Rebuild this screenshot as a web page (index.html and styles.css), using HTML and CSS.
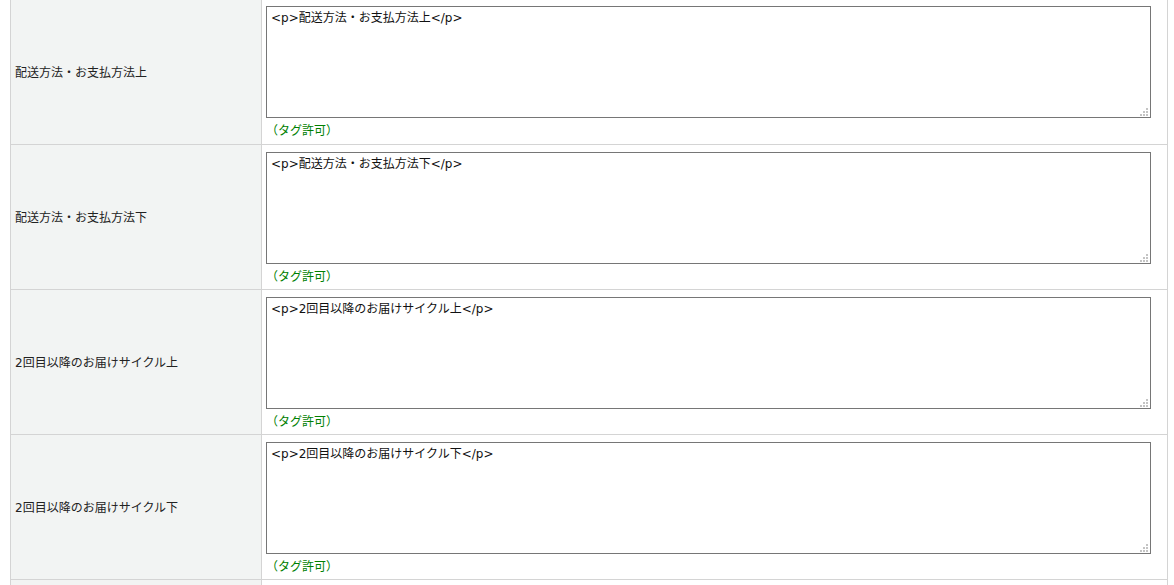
FILE: index.html
```html
<!DOCTYPE html>
<html lang="ja">
<head>
    <meta charset="UTF-8">
    <meta name="viewport" content="width=device-width, initial-scale=1.0">
    <title>テンプレート設定</title>
    <link rel="stylesheet" href="styles.css">
</head>
<body>
    <table class="form-table">
        <tr>
            <th>配送方法・お支払方法上</th>
            <td>
                <div class="field">
                    <textarea>&lt;p&gt;配送方法・お支払方法上&lt;/p&gt;</textarea>
                    <svg class="grip" width="8" height="8" viewBox="0 0 8 8"><path d="M6 0h2v2h-2zM3 3h2v2h-2zM6 3h2v2h-2zM0 6h2v2h-2zM3 6h2v2h-2zM6 6h2v2h-2z"/></svg>
                </div>
                <div class="note">（タグ許可）</div>
            </td>
        </tr>
        <tr>
            <th>配送方法・お支払方法下</th>
            <td>
                <div class="field">
                    <textarea>&lt;p&gt;配送方法・お支払方法下&lt;/p&gt;</textarea>
                    <svg class="grip" width="8" height="8" viewBox="0 0 8 8"><path d="M6 0h2v2h-2zM3 3h2v2h-2zM6 3h2v2h-2zM0 6h2v2h-2zM3 6h2v2h-2zM6 6h2v2h-2z"/></svg>
                </div>
                <div class="note">（タグ許可）</div>
            </td>
        </tr>
        <tr>
            <th>2回目以降のお届けサイクル上</th>
            <td>
                <div class="field">
                    <textarea>&lt;p&gt;2回目以降のお届けサイクル上&lt;/p&gt;</textarea>
                    <svg class="grip" width="8" height="8" viewBox="0 0 8 8"><path d="M6 0h2v2h-2zM3 3h2v2h-2zM6 3h2v2h-2zM0 6h2v2h-2zM3 6h2v2h-2zM6 6h2v2h-2z"/></svg>
                </div>
                <div class="note">（タグ許可）</div>
            </td>
        </tr>
        <tr>
            <th>2回目以降のお届けサイクル下</th>
            <td>
                <div class="field">
                    <textarea>&lt;p&gt;2回目以降のお届けサイクル下&lt;/p&gt;</textarea>
                    <svg class="grip" width="8" height="8" viewBox="0 0 8 8"><path d="M6 0h2v2h-2zM3 3h2v2h-2zM6 3h2v2h-2zM0 6h2v2h-2zM3 6h2v2h-2zM6 6h2v2h-2z"/></svg>
                </div>
                <div class="note">（タグ許可）</div>
            </td>
        </tr>
        <tr>
            <th></th>
            <td></td>
        </tr>
    </table>
</body>
</html>
```

FILE: styles.css
```css
body {
    margin: 0;
    background-color: #fff;
    font-family: "DejaVu Sans", "Noto Sans CJK JP", sans-serif;
    font-size: 12px;
    color: #222;
    overflow: hidden;
}
.form-table {
    border-collapse: collapse;
    width: 1158px;
    margin: -1px 0 0 10px;
}
.form-table th, .form-table td {
    border: 1px solid #d4d4d4;
    padding: 7px 4px 3px 4px;
}
.form-table tr:first-child td {
    padding-top: 6px;
}
.form-table th {
    width: 242px;
    padding-top: 4px;
    padding-bottom: 6px;
    background-color: #f2f4f3;
    font-weight: normal;
    text-align: left;
    vertical-align: middle;
}
.form-table td {
    vertical-align: top;
}
.form-table tr {
    height: 145px;
}
.field {
    position: relative;
    width: 885px;
}
.field textarea {
    display: block;
    box-sizing: border-box;
    width: 100%;
    height: 112px;
    margin: 0;
    padding: 2px 4px;
    border: 1px solid #767676;
    font-family: "DejaVu Sans", "Noto Sans CJK JP", sans-serif;
    font-size: 12px;
    line-height: 18px;
    color: #111;
    resize: none;
}
.grip {
    position: absolute;
    right: 3px;
    bottom: 2px;
    fill: #c4c4c4;
}
.note {
    margin-top: 4px;
    line-height: 18px;
    color: #008000;
}
```
